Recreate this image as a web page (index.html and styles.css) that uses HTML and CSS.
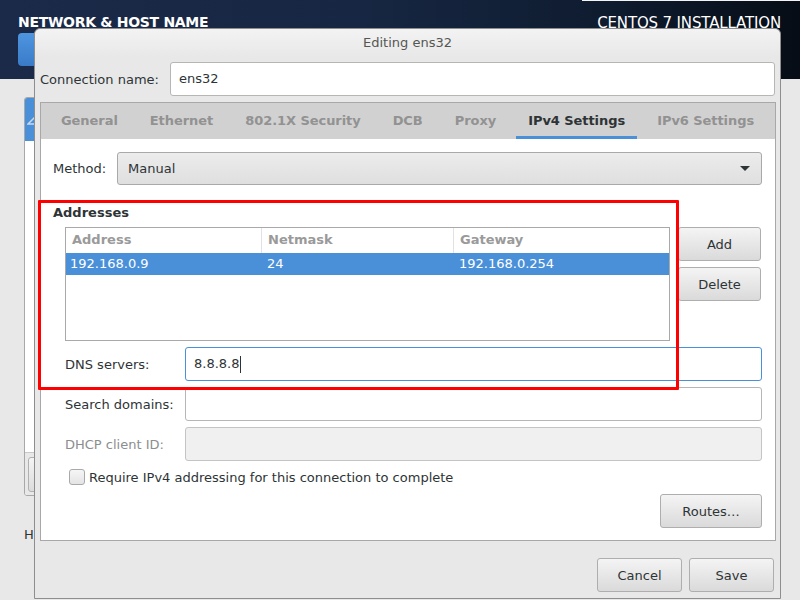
FILE: index.html
```html
<!DOCTYPE html>
<html>
<head>
<meta charset="utf-8">
<title>Editing ens32</title>
<link rel="stylesheet" href="styles.css">
</head>
<body>
<div class="screen">
  <header class="topbar">
    <div class="topbar-left">
      <h1 class="spoke-title">NETWORK &amp; HOST NAME</h1>
      <div class="done-btn">Done</div>
    </div>
    <div class="topbar-right">
      <div class="product">CENTOS 7 INSTALLATION</div>
    </div>
  </header>
  <main class="hub">
    <div class="devices">
      <div class="device-row">
        <svg class="device-icon" width="14" height="14" viewBox="0 0 14 14"><path d="M1 11 L7 5 L13 11 Z" fill="none" stroke="#c9d9ee" stroke-width="1.5"/></svg>
      </div>
      <div class="device-fill"></div>
      <div class="device-tools"><div class="tool-btn"></div></div>
    </div>
    <div class="hostname">Host name:</div>
  </main>

  <section class="dialog">
    <div class="dialog-title">Editing ens32</div>
    <div class="dialog-body">
      <div class="conn-row">
        <span class="conn-label">Connection name:</span>
        <div class="entry conn-entry">ens32</div>
      </div>
      <div class="notebook">
        <nav class="tabs">
          <span class="tab">General</span>
          <span class="tab">Ethernet</span>
          <span class="tab">802.1X Security</span>
          <span class="tab">DCB</span>
          <span class="tab">Proxy</span>
          <span class="tab active">IPv4 Settings</span>
          <span class="tab">IPv6 Settings</span>
        </nav>
        <div class="page">
          <div class="method-row">
            <span class="method-label">Method:</span>
            <div class="combo">
              <span>Manual</span>
              <svg class="combo-arrow" width="10" height="6" viewBox="0 0 10 6"><path d="M0 0 H10 L5 5 Z" fill="#2e3436"/></svg>
            </div>
          </div>
          <div class="section-title">Addresses</div>
          <div class="addr-block">
            <div class="addr-table">
              <div class="addr-head">
                <span class="col c1">Address</span>
                <span class="col c2">Netmask</span>
                <span class="col c3">Gateway</span>
              </div>
              <div class="addr-row selected">
                <span class="col c1">192.168.0.9</span>
                <span class="col c2">24</span>
                <span class="col c3">192.168.0.254</span>
              </div>
            </div>
            <div class="addr-buttons">
              <div class="btn">Add</div>
              <div class="btn">Delete</div>
            </div>
          </div>
          <div class="field-row">
            <span class="field-label">DNS servers:</span>
            <div class="entry focused">8.8.8.8<span class="caret"></span></div>
          </div>
          <div class="field-row">
            <span class="field-label">Search domains:</span>
            <div class="entry"></div>
          </div>
          <div class="field-row">
            <span class="field-label disabled">DHCP client ID:</span>
            <div class="entry disabled"></div>
          </div>
          <label class="check-row">
            <span class="checkbox"></span>
            <span>Require IPv4 addressing for this connection to complete</span>
          </label>
          <div class="routes-row">
            <div class="btn routes">Routes…</div>
          </div>
        </div>
      </div>
      <div class="dialog-footer">
        <div class="btn footer-btn">Cancel</div>
        <div class="btn footer-btn">Save</div>
      </div>
    </div>
  </section>

  <div class="highlight"></div>
</div>
</body>
</html>
```
FILE: styles.css
```css
* { box-sizing: border-box; }
body {
  margin: 0;
  font-family: "DejaVu Sans", sans-serif;
  font-size: 13px;
  color: #2e3436;
}
.screen {
  position: relative;
  width: 800px;
  height: 600px;
  overflow: hidden;
  background: #e8e8e8;
}

/* top bar */
.topbar {
  height: 79px;
  display: flex;
  justify-content: space-between;
  background: linear-gradient(to right, #1b2a48 0%, #172642 45%, #0f1c30 75%, #060d16 100%);
  color: #fff;
}
.topbar-left { padding: 13px 0 0 18px; }
.spoke-title {
  margin: 0;
  font-size: 14px;
  letter-spacing: -0.3px;
  font-weight: bold;
  line-height: 18px;
}
.done-btn {
  margin-top: 2px;
  width: 70px;
  height: 33px;
  border-radius: 4px;
  background: linear-gradient(#4e95e0, #3a7bc8);
  color: #fff;
  font-size: 13px;
  line-height: 33px;
  text-align: center;
}
.topbar-right {
  width: 218px;
  padding: 13px 19px 0 0;
  border-top: 1px solid #f4f4f4;
  text-align: right;
}
.product {
  font-size: 15px;
  line-height: 18px;
  letter-spacing: -0.15px;
}

/* hub under dialog */
.hub { padding: 18px 0 0 24px; }
.devices {
  width: 300px;
  height: 399px;
  border: 1px solid #a8a8a8;
  border-radius: 3px;
  background: #fff;
  display: flex;
  flex-direction: column;
  overflow: hidden;
}
.device-row {
  height: 43px;
  background: #4a90d9;
  display: flex;
  align-items: center;
  padding-left: 2px;
}
.device-fill { flex: 1; }
.device-tools {
  height: 43px;
  background: #e8e8e8;
  border-top: 1px solid #c8c8c8;
  padding: 4px 3px;
}
.tool-btn {
  width: 30px;
  height: 35px;
  border: 1px solid #b0b0b0;
  border-radius: 3px;
  background: linear-gradient(#f4f4f4, #dcdcdc);
}
.hostname {
  margin-top: 31px;
  font-size: 13px;
  line-height: 16px;
}

/* dialog window */
.dialog {
  position: absolute;
  left: 34px;
  top: 28px;
  width: 747px;
  height: 571px;
  border: 1px solid #8e8e8e;
  border-radius: 6px 6px 0 0;
  background: #e8e8e8;
  display: flex;
  flex-direction: column;
}
.dialog-title {
  height: 28px;
  line-height: 28px;
  text-align: center;
  color: #555753;
  border-radius: 6px 6px 0 0;
  background: linear-gradient(#f3f3f3, #e8e8e8);
}
.dialog-body {
  flex: 1;
  padding: 5px 4px 0 5px;
  display: flex;
  flex-direction: column;
}
.conn-row {
  display: flex;
  align-items: center;
  height: 34px;
  padding-right: 1px;
}
.conn-label { width: 130px; }
.conn-entry { flex: 1; padding-left: 9px; }

.entry {
  height: 34px;
  flex: 1;
  background: #fff;
  border: 1px solid #b6b6b3;
  border-radius: 3px;
  padding-left: 8px;
  line-height: 32px;
  display: flex;
  align-items: center;
  color: #2e3436;
}
.entry.focused { border-color: #4a90d9; }
.entry.disabled { background: #f0f0f0; border-color: #c4c4c4; }
.caret {
  display: inline-block;
  width: 1px;
  height: 17px;
  background: #2e3436;
  margin-left: 1px;
}

/* notebook */
.notebook {
  margin-top: 6px;
  height: 439px;
  border: 1px solid #a8a8a8;
  display: flex;
  flex-direction: column;
  background: #fff;
}
.tabs {
  height: 36px;
  background: #d1d1d1;
  display: flex;
  gap: 8px;
  padding-left: 8px;
}
.tab {
  padding: 0 12px;
  line-height: 36px;
  font-weight: bold;
  letter-spacing: -0.06px;
  color: #929292;
  white-space: nowrap;
  border-bottom: 3px solid transparent;
  height: 36px;
}
.tab.active {
  color: #2e3436;
  border-bottom-color: #4a90d9;
}
.page {
  flex: 1;
  padding: 13px 13px 0 12px;
  display: flex;
  flex-direction: column;
}
.method-row {
  display: flex;
  align-items: center;
  height: 33px;
}
.method-label { width: 64px; }
.combo {
  flex: 1;
  height: 33px;
  border: 1px solid #a9a9a9;
  border-radius: 3px;
  background: linear-gradient(#ececec, #dfdfdf);
  display: flex;
  align-items: center;
  justify-content: space-between;
  padding: 0 11px 0 10px;
}
.combo-arrow { display: block; }
.section-title {
  margin-top: 20px;
  font-weight: bold;
  line-height: 16px;
}
.addr-block {
  margin-top: 6px;
  margin-left: 12px;
  display: flex;
  gap: 8px;
}
.addr-table {
  width: 605px;
  height: 114px;
  border: 1px solid #a9a9a9;
  background: #fff;
}
.addr-head, .addr-row { display: flex; }
.addr-head {
  height: 25px;
  font-weight: bold;
  color: #9a9a9a;
  line-height: 24px;
}
.addr-head .col { border-right: 1px solid #e2e2e2; padding-left: 6px; }
.addr-head .c3 { border-right: none; }
.col { white-space: nowrap; }
.c1 { width: 196px; }
.c2 { width: 192px; }
.c3 { flex: 1; }
.addr-row {
  height: 22px;
  line-height: 22px;
}
.addr-row .col { padding-left: 4px; }
.addr-row .c2, .addr-row .c3 { padding-left: 5px; }
.addr-row.selected { background: #4a90d9; color: #fff; }
.addr-buttons {
  width: 83px;
  display: flex;
  flex-direction: column;
  gap: 6px;
}

.btn {
  height: 34px;
  border: 1px solid #aeaeae;
  border-radius: 3px;
  background: linear-gradient(#f4f4f4, #dadada);
  color: #2e3436;
  display: flex;
  align-items: center;
  justify-content: center;
}

.field-row {
  display: flex;
  align-items: center;
  margin-top: 6px;
  margin-left: 12px;
}
.field-label { width: 120px; }
.field-label.disabled { color: #8b8e8f; }

.check-row {
  margin-top: 8px;
  margin-left: 16px;
  display: flex;
  align-items: center;
  gap: 4px;
  height: 16px;
}
.checkbox {
  width: 16px;
  height: 16px;
  border: 1px solid #a9a9a9;
  border-radius: 3px;
  background: linear-gradient(#f6f6f6, #e4e4e4);
}
.routes-row {
  margin-top: 9px;
  display: flex;
  justify-content: flex-end;
}
.routes { width: 102px; height: 34px; }

.dialog-footer {
  padding: 17px 2px 0 0;
  display: flex;
  justify-content: flex-end;
  gap: 7px;
}
.footer-btn { width: 85px; height: 34px; }

/* annotation */
.highlight {
  position: absolute;
  left: 38px;
  top: 200px;
  width: 641px;
  height: 190px;
  border: 3px solid #ff0000;
  border-radius: 1px;
}
```
